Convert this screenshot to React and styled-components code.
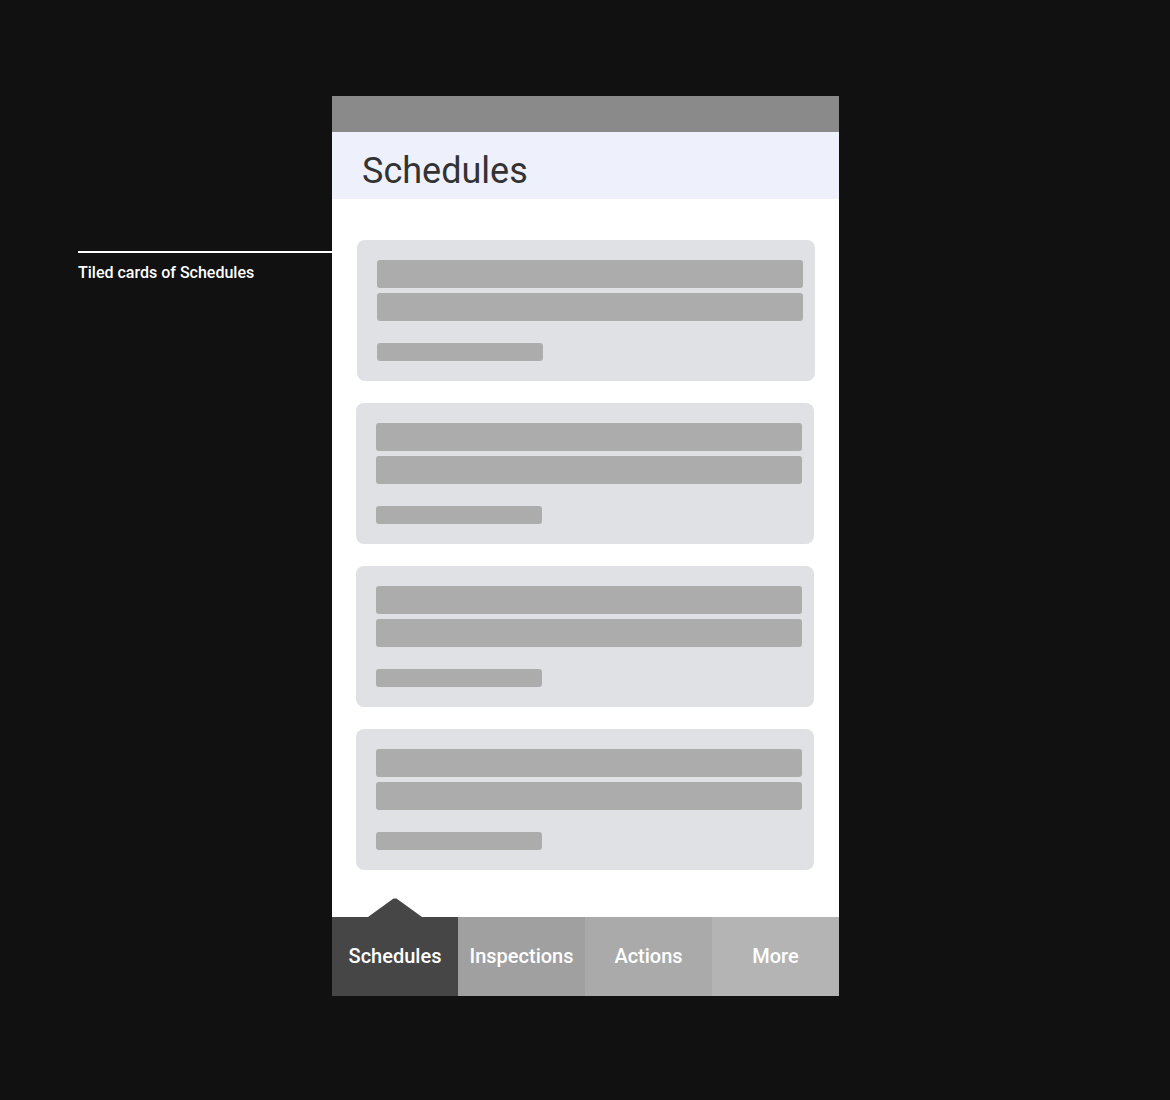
import styled, { createGlobalStyle } from 'styled-components'

const GlobalStyle = createGlobalStyle`
  html, body {
    margin: 0;
    padding: 0;
    background-color: #111111;
  }
  body {
    font-family: Roboto, 'Noto Sans', sans-serif;
  }
`

const Stage = styled.div`
  width: 1170px;
  height: 1100px;
  display: flex;
  align-items: flex-start;
  padding-top: 96px;
  box-sizing: border-box;
`

const Annotation = styled.div`
  width: 254px;
  margin-left: 78px;
  margin-top: 155px;
  display: flex;
  flex-direction: column;
  gap: 11px;
`

const Pointer = styled.div`
  height: 2px;
  background-color: #ffffff;
`

const Note = styled.span`
  color: #ffffff;
  font-size: 16px;
  font-weight: 500;
  line-height: 18px;
`

const Phone = styled.div`
  width: 507px;
  height: 900px;
  background-color: #ffffff;
  display: flex;
  flex-direction: column;
`

const StatusBar = styled.div`
  height: 36px;
  background-color: #8a8a8a;
`

const Header = styled.div`
  height: 67px;
  box-sizing: border-box;
  background-color: #eef0fb;
  display: flex;
  align-items: center;
  padding-left: 30px;
  padding-top: 10px;
`

const Title = styled.h1`
  margin: 0;
  font-size: 36px;
  font-weight: 400;
  color: #333333;
  line-height: 1;
`

const CardList = styled.div`
  flex: 1;
  display: flex;
  flex-direction: column;
  gap: 22px;
  padding: 41px 25px 0 24px;
`

const Card = styled.div`
  height: 141px;
  box-sizing: border-box;
  background-color: #dfe1e4;
  border-radius: 8px;
  padding: 20px 12px 20px 20px;
  display: flex;
  flex-direction: column;
  gap: 5px;
  margin-left: ${(props) => (props.$nudge ? '1px' : '0')};
  margin-right: ${(props) => (props.$nudge ? '-1px' : '0')};
`

const Bar = styled.div`
  height: ${(props) => props.$h}px;
  width: ${(props) => props.$w || '100%'};
  margin-top: ${(props) => props.$gap || 0}px;
  background-color: #acacac;
  border-radius: 3px;
`

const TabBar = styled.div`
  height: 79px;
  display: grid;
  grid-template-columns: 126px 127px 127px 127px;
`

const Tab = styled.div`
  position: relative;
  background-color: ${(props) => props.$bg};
  color: #ffffff;
  font-size: 20px;
  font-weight: 500;
  display: flex;
  align-items: center;
  justify-content: center;
  padding-bottom: 2px;
`

const Caret = styled.svg`
  position: absolute;
  top: -19px;
  left: 36px;
`

const tabs = [
  { label: 'Schedules', bg: '#464646', active: true },
  { label: 'Inspections', bg: '#a0a0a0' },
  { label: 'Actions', bg: '#aaaaaa' },
  { label: 'More', bg: '#b4b4b4' },
]

function SkeletonCard({ nudge }) {
  return (
    <Card $nudge={nudge}>
      <Bar $h={28} />
      <Bar $h={28} />
      <Bar $h={18} $w="166px" $gap={17} />
    </Card>
  )
}

export default function App() {
  return (
    <>
      <GlobalStyle />
      <Stage>
        <Annotation>
          <Pointer />
          <Note>Tiled cards of Schedules</Note>
        </Annotation>
        <Phone>
          <StatusBar />
          <Header>
            <Title>Schedules</Title>
          </Header>
          <CardList>
            <SkeletonCard nudge />
            <SkeletonCard />
            <SkeletonCard />
            <SkeletonCard />
          </CardList>
          <TabBar>
            {tabs.map((t) => (
              <Tab key={t.label} $bg={t.bg}>
                {t.active && (
                  <Caret width="54" height="19" viewBox="0 0 54 19">
                    <path d="M0 19 L25.5 0.5 L28.5 0.5 L54 19 Z" fill="#464646" />
                  </Caret>
                )}
                {t.label}
              </Tab>
            ))}
          </TabBar>
        </Phone>
      </Stage>
    </>
  )
}
